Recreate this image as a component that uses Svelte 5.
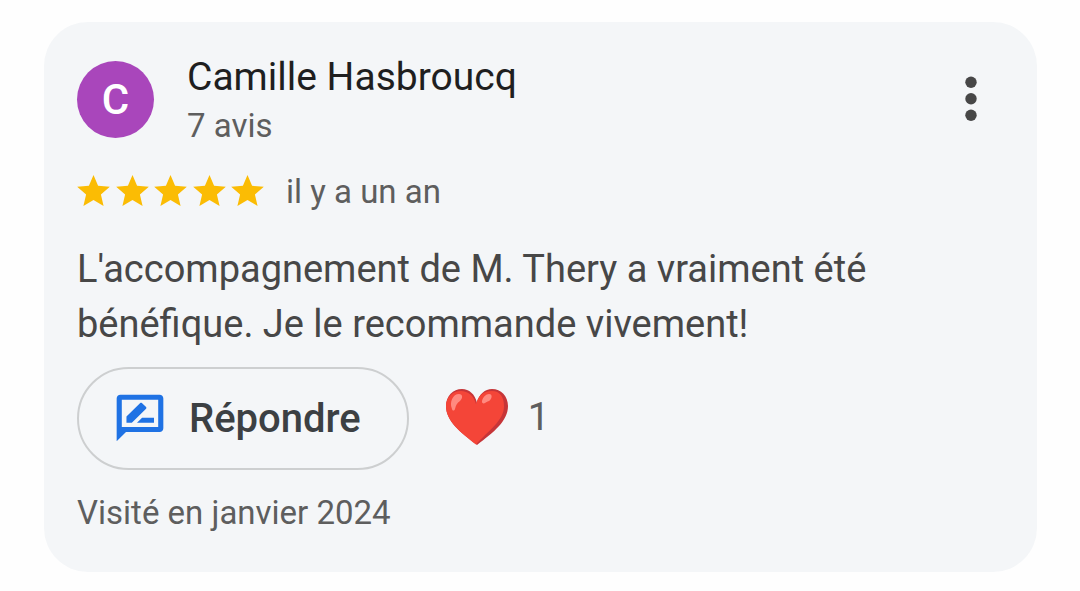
<script>
  const author = 'Camille Hasbroucq';
  const rating = 5;
</script>

<main>
  <article class="card">
    <header>
      <div class="avatar" aria-hidden="true">{author[0]}</div>
      <div class="who">
        <h1>{author}</h1>
        <p class="meta">7 avis</p>
      </div>
      <button class="more" type="button" aria-label="Plus d'options">
        <svg viewBox="0 0 12 46" aria-hidden="true">
          <circle cx="6" cy="6.3" r="5.7" /><circle cx="6" cy="22.8" r="5.7" /><circle cx="6" cy="39.3" r="5.7" />
        </svg>
      </button>
    </header>

    <div class="rating">
      <div class="stars" role="img" aria-label="5 étoiles sur 5">
        {#each Array(rating) as _}
          <svg viewBox="2 2 20 19" aria-hidden="true">
            <path d="M12 17.27 18.18 21l-1.64-7.03L22 9.24l-7.19-.61L12 2 9.19 8.63 2 9.24l5.46 4.73L5.82 21z" />
          </svg>
        {/each}
      </div>
      <span class="meta">il y a un an</span>
    </div>

    <p class="review">L'accompagnement de M. Thery a vraiment été bénéfique. Je le recommande vivement!</p>

    <div class="actions">
      <button class="reply" type="button">
        <svg viewBox="0 0 24 24" aria-hidden="true">
          <path fill-rule="evenodd" d="M3.6 2h16.8C21.3 2 22 2.7 22 3.6v12.8c0 .9-.7 1.6-1.6 1.6H6l-4 4V3.6C2 2.7 2.7 2 3.6 2zM4.2 4.2v11.7h15.6V4.2z" />
          <path d="M6.2 14v-2.6l5.9-5.8c.2-.2.5-.2.7 0l1.8 1.7c.2.2.2.5 0 .7L8.5 14zM18 14h-7.3l2.2-2.1H18z" />
        </svg>
        <span>Répondre</span>
      </button>
      <button class="like" type="button" aria-label="J'aime, 1 réaction">
        <svg viewBox="0 0 62 56" aria-hidden="true">
          <path fill="#c63538" d="M31 14C29 5 23 0 16 0 7 0 0 7 0 17c0 15 14 26 31 39 17-13 31-24 31-39C62 7 55 0 46 0 39 0 33 5 31 14z" />
          <path fill="#f44538" d="M30 15C28 7 22 2 15 2 7 2 0 8 0 17c0 15 14 26 30 38.5 12-13.5 28-24 28-38C58 8 54 2 46 2 37 2 32 7 30 15z" />
          <path fill="#ff8a80" d="M6 20C3 13 7 5 13 5c4 0 4 4 1 7-3 2-4 4-5 8-.7 2-2.500 2-3 0zM36 12c1-4 4-7 7-7 4 0 3 5 0 7-2 1-3 1-4 2-1.500 1-3.500 0-3-2z" />
        </svg>
        <span>1</span>
      </button>
    </div>

    <p class="meta">Visité en janvier 2024</p>
  </article>
</main>

<style>
  :global(body) {
    margin: 0;
    background: #fefefe;
  }
  main {
    padding: 22px 43px 19px 44px;
    font-family: Roboto, sans-serif;
  }
  .card {
    padding: 33px 33px 37px;
    border-radius: 44px;
    background: #f4f6f8;
  }
  h1, p {
    margin: 0;
    font-weight: 400;
  }
  button {
    font-family: inherit;
    background: none;
    border: 0;
    padding: 0;
    cursor: pointer;
  }
  svg {
    display: block;
    flex: none;
  }
  header {
    display: flex;
    align-items: flex-start;
  }
  .avatar {
    display: grid;
    place-items: center;
    width: 77px;
    height: 77px;
    margin: 6px 33px 0 0;
    border-radius: 50%;
    background: #a946bb;
    color: #fff;
    font-size: 42px;
    font-weight: 500;
    line-height: 50px;
  }
  .who {
    flex: 1;
  }
  h1 {
    font-size: 39px;
    line-height: 44px;
    color: #1f1f1f;
  }
  .meta {
    font-size: 33px;
    line-height: 44px;
    color: #5e5e5e;
  }
  .who .meta {
    padding-top: 5px;
  }
  .more {
    padding: 21px 27px;
    fill: #474747;
  }
  .more svg {
    width: 12px;
    height: 46px;
  }
  .rating {
    display: flex;
    align-items: center;
    gap: 22px;
    margin-top: 22px;
  }
  .stars {
    display: flex;
    justify-content: space-between;
    width: 187px;
    padding-bottom: 3px;
    fill: #fbbc04;
  }
  .stars svg {
    width: 33px;
    height: 31px;
  }
  .review {
    margin-top: 28px;
    font-size: 38px;
    line-height: 55px;
    color: #474747;
  }
  .actions {
    display: flex;
    align-items: center;
    gap: 37px;
    margin: 15px 0 21px;
  }
  .reply {
    display: flex;
    align-items: center;
    gap: 21px;
    padding: 21px 46px 22px 33px;
    border: 2px solid #cdcfd0;
    border-radius: 52px;
    color: #3c4043;
    font-size: 40px;
    font-weight: 500;
    line-height: 55px;
  }
  .reply svg {
    width: 56px;
    height: 56px;
    fill: #1f72e4;
  }
  .like {
    display: flex;
    align-items: center;
    gap: 20px;
    padding-bottom: 3px;
    color: #5e5e5e;
    font-size: 39px;
    line-height: 44px;
  }
  .like svg {
    width: 62px;
    height: 56px;
  }
</style>
